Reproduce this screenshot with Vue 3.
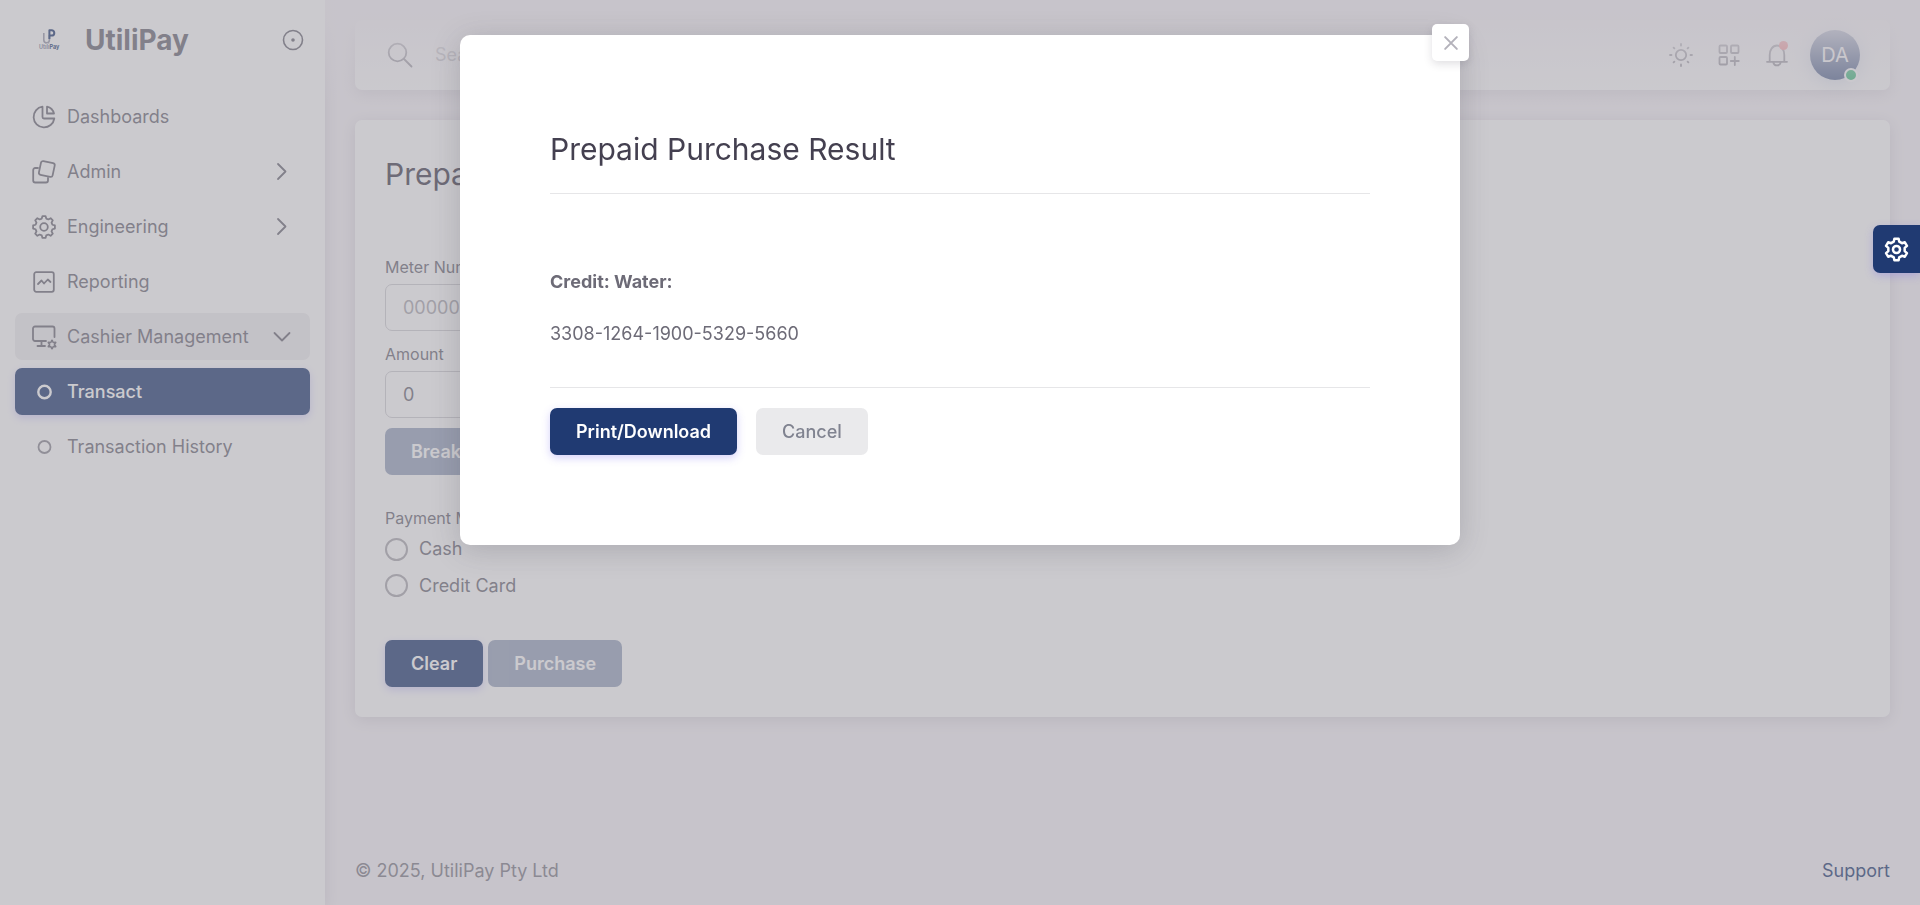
<script setup>
import { ref } from 'vue'

const meter = ref('')
const amount = ref('0')
const payment = ref('')

/* Outline of a cog centred in a 24-unit box. */
function cog(teeth, outer, inner, tip, root) {
  const points = []
  const at = (deg, r) => {
    const a = (deg * Math.PI) / 180
    return `${(12 + r * Math.sin(a)).toFixed(2)} ${(12 - r * Math.cos(a)).toFixed(2)}`
  }
  for (let i = 0; i < teeth; i++) {
    const a = (360 / teeth) * i
    points.push(at(a - root, inner), at(a - tip, outer), at(a + tip, outer), at(a + root, inner))
  }
  return `M${points.join('L')}Z`
}

const menuCog = cog(8, 11, 8.7, 8, 15)
const settingsCog = cog(6, 10.6, 8, 11, 19)
const smallCog = cog(6, 8.5, 5, 3, 24)
</script>

<template>
  <div class="layout">
    <aside class="sidebar">
      <div class="brand">
        <svg class="logo" viewBox="0 0 20 23" aria-hidden="true">
          <path d="M4.8 4v7a2.8 2.8 0 0 0 5.6 0V6" fill="none" stroke="#9a9bac" stroke-width="1.6" />
          <path d="M10.4 10V1.2h2.2a2.5 2.5 0 0 1 0 5.4h-2" fill="none" stroke="#203a72" stroke-width="2" />
          <text x="0" y="20" font-size="5.5" class="logo-text" fill="#8587a0">Utili<tspan fill="#203a72">Pay</tspan></text>
        </svg>
        <span class="brand-name">UtiliPay</span>
        <button class="pin" type="button" aria-label="Collapse menu">
          <svg viewBox="0 0 22 22"><circle cx="11" cy="11" r="9.5" /><circle cx="11" cy="11" r="1.8" class="solid" /></svg>
        </button>
      </div>
      <nav class="menu">
        <a href="#" class="item">
          <svg class="icon" viewBox="0 0 24 24"><path d="M10.500 1.700A10.400 10.400 0 1 0 22.300 13.500H12a1.500 1.500 0 0 1-1.500-1.500Z" /><path d="M15 1.600V8.500h7A9.500 9.500 0 0 0 15 1.600Z" /></svg>
          <span>Dashboards</span>
        </a>
        <a href="#" class="item">
          <svg class="icon" viewBox="0 0 24 24"><rect x="7.800" y="2" width="14" height="14" rx="2" transform="rotate(12 14.800 9)" /><path d="M6 8H3.200a2 2 0 0 0-2 2v10.500a2 2 0 0 0 2 2H14a2 2 0 0 0 2-2V18" /></svg>
          <span>Admin</span>
          <svg class="chevron" viewBox="0 0 24 24"><path d="m8 4 7.500 7.500L8 19" /></svg>
        </a>
        <a href="#" class="item">
          <svg class="icon" viewBox="0 0 24 24"><path :d="menuCog" /><circle cx="12" cy="12" r="3.800" /></svg>
          <span>Engineering</span>
          <svg class="chevron" viewBox="0 0 24 24"><path d="m8 4 7.500 7.500L8 19" /></svg>
        </a>
        <a href="#" class="item">
          <svg class="icon" viewBox="0 0 24 24"><rect x="2.200" y="2.200" width="19.600" height="19.600" rx="2" /><path d="m6 14 3.500-3.500 2.500 3 3.800-4L18.500 12" /></svg>
          <span>Reporting</span>
        </a>
        <a href="#" class="item open">
          <svg class="icon" viewBox="0 0 24 24"><path d="M14 16H3a2 2 0 0 1-2-2V3.500a2 2 0 0 1 2-2h17.500a2 2 0 0 1 2 2V12M9.500 16v5M5.500 21H13" /><g transform="translate(14 13.500) scale(.5)"><path :d="smallCog" stroke-width="3" /></g></svg>
          <span>Cashier Management</span>
          <svg class="chevron" viewBox="0 0 24 24"><path d="m4.500 8 7.500 7.500L19.500 8" /></svg>
        </a>
        <a href="#" class="item active">
          <svg class="icon" viewBox="0 0 24 24"><circle cx="12.500" cy="12" r="6.200" stroke-width="2.400" /></svg>
          <span>Transact</span>
        </a>
        <a href="#" class="item sub">
          <svg class="icon" viewBox="0 0 24 24"><circle cx="12.500" cy="12" r="6" /></svg>
          <span>Transaction History</span>
        </a>
      </nav>
    </aside>

    <div class="page">
      <header class="navbar">
        <label class="search">
          <svg viewBox="0 0 24 24"><circle cx="9.500" cy="9.500" r="8.800" /><path d="m16 16 7.500 7.500" /></svg>
          <input type="search" placeholder="Search" aria-label="Search" />
        </label>
        <div class="actions">
          <button type="button" aria-label="Theme">
            <svg viewBox="0 0 24 24"><circle cx="12" cy="12" r="5.200" /><path d="M12 1v1.500M12 21.500V23M1 12h1.500M21.500 12H23M4.600 4.600l.800.800M18.600 18.600l.800.800M4.600 19.400l.800-.800M18.600 5.400l.800-.800" /></svg>
          </button>
          <button type="button" aria-label="Shortcuts">
            <svg viewBox="0 0 24 24"><rect x="2.500" y="2.500" width="7.500" height="7.500" rx="1" /><rect x="14" y="2.500" width="7.500" height="7.500" rx="1" /><rect x="2.500" y="14" width="7.500" height="7.500" rx="1" /><path d="M17.800 14v8M13.800 18h8" /></svg>
          </button>
          <button type="button" aria-label="Notifications">
            <svg viewBox="0 0 24 24"><path d="M2 18.800h20M4.700 18.500V12c0-5 2.800-9.500 7.300-9.500s7.300 4.500 7.300 9.500v6.500M8.300 19.500a3.800 3.800 0 0 0 7.400 0" /></svg>
            <i class="alert"></i>
          </button>
          <button type="button" class="avatar" aria-label="Account">DA<i class="online"></i></button>
        </div>
      </header>

      <main class="card">
        <h1>Prepaid Purchase</h1>
        <form @submit.prevent>
          <div class="field">
            <label for="meter">Meter Number</label>
            <input id="meter" v-model="meter" type="text" placeholder="00000000000" />
          </div>
          <div class="field">
            <label for="amount">Amount</label>
            <input id="amount" v-model="amount" type="text" />
          </div>
          <button class="btn primary" type="button" disabled>Breakdown</button>
          <fieldset>
            <legend>Payment Method</legend>
            <label><input v-model="payment" type="radio" name="payment" value="cash" />Cash</label>
            <label><input v-model="payment" type="radio" name="payment" value="card" />Credit Card</label>
          </fieldset>
          <div class="row">
            <button class="btn primary" type="button">Clear</button>
            <button class="btn primary" type="submit" disabled>Purchase</button>
          </div>
        </form>
      </main>

      <footer class="footer">
        <span>© 2025, UtiliPay Pty Ltd</span>
        <a href="#">Support</a>
      </footer>
    </div>

    <div class="backdrop">
      <section class="modal" role="dialog" aria-modal="true" aria-labelledby="result-title">
        <button class="close" type="button" aria-label="Close">
          <svg viewBox="0 0 24 24"><path d="m5 5 14 14M19 5 5 19" /></svg>
        </button>
        <h2 id="result-title">Prepaid Purchase Result</h2>
        <div class="result">
          <p><strong>Credit: Water:</strong></p>
          <p>3308-1264-1900-5329-5660</p>
        </div>
        <div class="row wide">
          <button class="btn primary" type="button">Print/Download</button>
          <button class="btn muted" type="button">Cancel</button>
        </div>
      </section>
    </div>

    <button class="settings" type="button" aria-label="Settings">
      <svg viewBox="0 0 24 24"><path :d="settingsCog" /><circle cx="12" cy="12" r="3.400" /></svg>
    </button>
  </div>
</template>

<style>
body {
  background: #f7f3f8;
}
</style>

<style scoped>
* {
  box-sizing: border-box;
}
.layout {
  display: flex;
  min-height: 100vh;
  font: 18px/28px Inter, "Liberation Sans", sans-serif;
  color: #6d6b77;
}
button,
input {
  font: inherit;
  color: inherit;
}
button {
  border: 0;
  padding: 0;
  background: none;
}
a {
  color: inherit;
  text-decoration: none;
}
svg {
  fill: none;
  stroke: currentColor;
  stroke-width: 1.8;
  stroke-linecap: round;
  stroke-linejoin: round;
  overflow: visible;
  flex: none;
}
.sidebar {
  width: 325px;
  flex: none;
  background: #fff;
  box-shadow: 0 3px 15px rgba(47, 43, 61, 0.14);
}
.brand {
  display: flex;
  align-items: center;
  height: 80px;
  padding: 0 21px 0 39px;
}
.logo {
  width: 20px;
  height: 23px;
  stroke-linecap: butt;
}
.logo-text {
  font-family: Inter, sans-serif;
  font-weight: 700;
  stroke: none;
}
.brand-name {
  margin-left: 26px;
  font-size: 28px;
  font-weight: 700;
}
.pin {
  margin-left: auto;
  height: 22px;
}
.pin svg {
  display: block;
  width: 22px;
  height: 22px;
  stroke-width: 1.6;
}
.solid {
  fill: currentColor;
  stroke: none;
}
.menu {
  display: grid;
  gap: 8px;
  padding: 13px 15px;
}
.item {
  display: flex;
  align-items: center;
  height: 47px;
  padding: 0 16px 0 17px;
  border-radius: 7px;
}
.icon {
  width: 24px;
  height: 24px;
  margin-right: 11px;
}
.chevron {
  width: 24px;
  height: 24px;
  margin-left: auto;
}
.open {
  background: #efeef0;
}
.active {
  background: #203a72;
  color: #fff;
  font-weight: 500;
  box-shadow: 0 3px 8px rgba(115, 103, 240, 0.3);
}
.sub svg {
  opacity: 0.8;
}
.page {
  position: relative;
  display: flex;
  flex: 1;
  flex-direction: column;
  min-width: 0;
  padding: 20px 30px 0;
}
.page::before {
  content: "";
  position: absolute;
  z-index: 1;
  inset: 0 0 auto;
  height: 110px;
  background: linear-gradient(rgba(247, 243, 248, 0.9) 18%, rgba(247, 243, 248, 0));
  pointer-events: none;
}
.navbar {
  display: flex;
  align-items: center;
  justify-content: space-between;
  height: 70px;
  padding: 0 30px 0 33px;
  border-radius: 7px;
  background: #fff;
  box-shadow: 0 3px 15px rgba(47, 43, 61, 0.14);
}
.search {
  display: flex;
  align-items: center;
  gap: 23px;
}
.search svg {
  width: 24px;
  height: 24px;
}
.search input {
  width: 300px;
  padding: 0;
  border: 0;
  background: none;
}
.search input::placeholder {
  color: #acaab1;
  opacity: 1;
}
.actions {
  display: flex;
  align-items: center;
  gap: 24px;
}
.actions button {
  position: relative;
  height: 24px;
}
.actions svg {
  display: block;
  width: 24px;
  height: 24px;
}
.actions .avatar {
  width: 50px;
  height: 50px;
  margin-left: -3px;
  border-radius: 50%;
  background: #203a72;
  color: #fff;
  font-size: 20px;
  box-shadow: 0 0 20px rgba(90, 120, 180, 0.35);
}
.alert {
  position: absolute;
  top: -2px;
  right: 1px;
  width: 9px;
  height: 9px;
  border-radius: 50%;
  background: #ff4c51;
}
.online {
  position: absolute;
  right: 2px;
  bottom: -2px;
  width: 14px;
  height: 14px;
  border: 2px solid #fff;
  border-radius: 50%;
  background: #00a854;
}
.card {
  margin-top: 30px;
  padding: 30px;
  border-radius: 7px;
  background: #fff;
  box-shadow: 0 3px 15px rgba(47, 43, 61, 0.14);
}
h1,
h2 {
  margin: 0;
  color: #444050;
  font-size: 30px;
  font-weight: 400;
  line-height: 48px;
}
form {
  padding-top: 56px;
}
.field label,
legend {
  display: block;
  padding: 0;
  font-size: 16px;
  line-height: 26px;
}
.field label {
  margin-bottom: 4px;
}
.field {
  margin-bottom: 10px;
}
.field input {
  display: block;
  width: 500px;
  height: 47px;
  padding: 0 17px;
  border: 1px solid #d1d0d4;
  border-radius: 7px;
  background: none;
}
.field input::placeholder {
  color: #acaab1;
  opacity: 1;
}
fieldset {
  margin: 30px 0 36px;
  padding: 0;
  border: 0;
}
fieldset label {
  display: flex;
  align-items: center;
  gap: 11px;
  height: 37px;
}
legend + label {
  height: 36px;
}
fieldset input {
  appearance: none;
  width: 23px;
  height: 23px;
  margin: 0;
  border: 2px solid #acaab1;
  border-radius: 50%;
}
.row {
  display: flex;
  gap: 5px;
}
.wide {
  gap: 19px;
}
.btn {
  height: 47px;
  padding: 0 26px;
  border-radius: 7px;
  font-weight: 600;
}
.primary {
  background: #203a72;
  color: #fff;
  box-shadow: 0 3px 8px rgba(115, 103, 240, 0.3);
}
.primary:disabled {
  opacity: 0.45;
  box-shadow: none;
}
.muted {
  background: #eaeaec;
  color: #808390;
  font-weight: 500;
}
.footer {
  display: flex;
  justify-content: space-between;
  margin-top: auto;
  padding: 20px 0;
  color: #7f7d88;
}
.footer a {
  color: #203a72;
}
.backdrop {
  position: fixed;
  z-index: 2;
  inset: 0;
  display: flex;
  align-items: flex-start;
  justify-content: center;
  padding-top: 35px;
  background: rgba(151, 149, 158, 0.5);
}
.modal {
  position: relative;
  width: min(1000px, 100%);
  padding: 90px;
  border-radius: 10px;
  background: #fff;
  box-shadow: 0 5px 30px rgba(47, 43, 61, 0.2);
}
.result {
  margin: 20px 0;
  padding: 74px 0 15px;
  border: solid #e6e6e8;
  border-width: 1px 0;
}
.result p {
  margin: 0 0 24px;
}
.result strong {
  font-weight: 700;
}
.close {
  position: absolute;
  top: -11px;
  right: -9px;
  display: grid;
  place-items: center;
  width: 37px;
  height: 37px;
  border-radius: 5px;
  background: #fff;
  color: #b4b2bb;
  box-shadow: 0 3px 8px rgba(47, 43, 61, 0.15);
}
.close svg {
  width: 20px;
  height: 20px;
  stroke-width: 2.4;
}
.settings {
  position: fixed;
  z-index: 3;
  top: 225px;
  right: 0;
  display: grid;
  place-items: center;
  width: 47px;
  height: 48px;
  border-radius: 7px 0 0 7px;
  background: #203a72;
  color: #fff;
  box-shadow: 0 3px 8px rgba(115, 103, 240, 0.3);
}
.settings svg {
  width: 25px;
  height: 25px;
  stroke-width: 2.4;
}
</style>
